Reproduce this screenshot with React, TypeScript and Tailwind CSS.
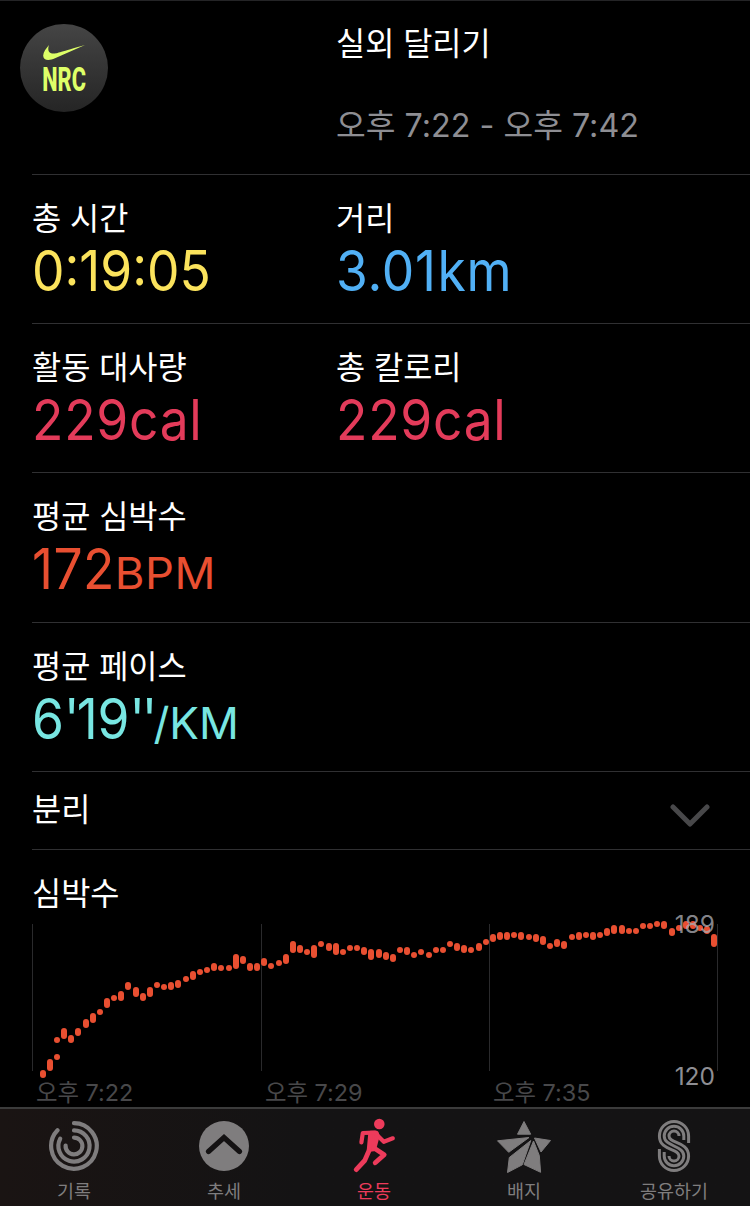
import type { ReactNode } from 'react';

const sans = "font-['Inter','Noto_Sans_CJK_KR',sans-serif]";

// [center x, top, bottom] in thirds of a pixel
const heartRate = [
  [129, 3210, 3234], [150, 3177, 3213], [171, 3162, 3180], [171, 3111, 3129], [192, 3084, 3117],
  [213, 3105, 3129], [234, 3084, 3108], [258, 3057, 3084], [279, 3039, 3069], [300, 3027, 3045],
  [321, 2994, 3024], [342, 2985, 3003], [363, 2973, 3003], [384, 2946, 2970], [408, 2961, 2991],
  [429, 2979, 3003], [450, 2961, 2991], [471, 2946, 2964], [492, 2952, 2970], [513, 2946, 2970],
  [534, 2940, 2964], [558, 2928, 2946], [579, 2913, 2940], [600, 2907, 2925], [621, 2901, 2919],
  [642, 2889, 2913], [663, 2895, 2913], [687, 2895, 2913], [708, 2862, 2907], [729, 2868, 2892],
  [750, 2889, 2913], [771, 2889, 2913], [792, 2874, 2898], [813, 2889, 2907], [837, 2880, 2898],
  [858, 2862, 2892], [879, 2823, 2859], [900, 2835, 2859], [921, 2847, 2865], [942, 2835, 2874],
  [963, 2823, 2841], [987, 2829, 2853], [1008, 2829, 2865], [1029, 2847, 2865], [1050, 2835, 2853],
  [1071, 2835, 2853], [1092, 2841, 2865], [1113, 2847, 2880], [1137, 2847, 2874], [1158, 2856, 2880],
  [1179, 2862, 2886], [1200, 2841, 2859], [1221, 2841, 2865], [1242, 2856, 2874], [1263, 2847, 2865],
  [1287, 2856, 2874], [1308, 2841, 2859], [1329, 2841, 2859], [1350, 2823, 2841], [1371, 2829, 2853],
  [1392, 2835, 2859], [1413, 2841, 2859], [1437, 2829, 2853], [1458, 2817, 2835], [1479, 2802, 2826],
  [1500, 2796, 2820], [1521, 2796, 2820], [1542, 2796, 2814], [1563, 2796, 2820], [1587, 2802, 2820],
  [1608, 2802, 2826], [1629, 2808, 2835], [1650, 2829, 2847], [1671, 2817, 2841], [1692, 2823, 2847],
  [1716, 2802, 2820], [1737, 2796, 2820], [1758, 2796, 2814], [1779, 2796, 2820], [1800, 2796, 2814],
  [1821, 2784, 2808], [1842, 2775, 2802], [1866, 2775, 2802], [1887, 2784, 2802], [1908, 2784, 2802],
  [1929, 2769, 2787], [1950, 2769, 2787], [1971, 2763, 2781], [1992, 2763, 2787], [2016, 2784, 2808],
  [2037, 2775, 2793], [2058, 2763, 2787], [2079, 2763, 2787], [2100, 2775, 2793], [2121, 2778, 2802],
  [2142, 2802, 2841],
];

function NrcBadge() {
  return (
    <div className="mt-[23px] ml-5 flex h-[88px] w-[88px] flex-col items-center rounded-full bg-gradient-to-b from-[#454545] to-[#252525] text-[#deff68]">
      <svg className="mt-[21px] h-[15px] w-[42px]" viewBox="0 0 42 15" fill="currentColor">
        <path d="M6 0C4.500 4 5 8.800 11 8.600 14 8.400 18 6.800 42 0L12 13.300C6 16 0 15.500.2 10.500.3 7 3 3.500 6 0Z" />
      </svg>
      <span className="mt-[6px] origin-center scale-x-[0.66] font-['Roboto',sans-serif] text-[33px] leading-[28px] font-extrabold">
        NRC
      </span>
    </div>
  );
}

function Metric({ label, className, children }: { label: string; className: string; children: ReactNode }) {
  return (
    <div>
      <div className="mt-[24px] text-[31.7px] leading-[40px] text-white">{label}</div>
      <div
        className={`mt-[2px] origin-left scale-x-[0.92] text-[56px] leading-[60px] font-[430] whitespace-nowrap ${className}`}
      >
        {children}
      </div>
    </div>
  );
}

function MetricRow({ tall, children }: { tall?: boolean; children: ReactNode }) {
  return (
    <div className={`ml-8 grid grid-cols-[304px_1fr] border-b border-[#303032] ${tall ? 'h-[150px]' : 'h-[149px]'}`}>
      {children}
    </div>
  );
}

function HeartRateChart() {
  return (
    <div className="relative h-[257px]">
      <h2 className="ml-8 pt-[24px] text-[31.7px] leading-[40px] text-white">심박수</h2>
      <svg className="mt-px block h-[165px] w-full" viewBox="0 915 750 165">
        {[32.5, 261.5, 489.5, 717.5].map((x) => (
          <line key={x} x1={x} x2={x} y1="924" y2="1071" stroke="#2a2a2c" />
        ))}
        {heartRate.map(([x, top, bottom], i) => (
          <rect key={i} x={x / 3 - 3} y={top / 3} width="6" height={(bottom - top) / 3} rx="3" fill="#e84f31" />
        ))}
      </svg>
      <div className="-mt-px flex pl-9 text-[23.4px] leading-[28px] text-[#48484a]">
        <span className="w-[229px]">오후 7:22</span>
        <span className="w-[228px]">오후 7:29</span>
        <span>오후 7:35</span>
      </div>
      <span className="absolute top-[60px] right-[35px] text-[24.5px] leading-[28px] text-[#a8a8af]/80">189</span>
      <span className="absolute top-[212px] right-[35px] text-[24.5px] leading-[28px] text-[#8e8e93]">120</span>
    </div>
  );
}

function RingsIcon() {
  return (
    <svg width="52" height="58" viewBox="48 1117 52 58" fill="none" stroke="currentColor" strokeWidth="4.2" strokeLinecap="round">
      <path d="M74 1123.200A22.800 22.800 0 1 1 57.500 1130.200" />
      <path d="M74 1130.400A15.600 15.600 0 1 1 60.200 1138.700" />
      <path d="M74 1137.600A8.400 8.400 0 1 1 65.600 1145.500" />
    </svg>
  );
}

function TrendsIcon() {
  return (
    <svg width="52" height="58" viewBox="198 1117 52 58" fill="none">
      <circle cx="224" cy="1146" r="25" fill="currentColor" />
      <path d="M208.500 1151.500 224 1137.500l15.500 14" stroke="#141213" strokeWidth="5.2" strokeLinecap="round" />
    </svg>
  );
}

function RunnerIcon() {
  return (
    <svg width="52" height="58" viewBox="348 1117 52 58" fill="none" stroke="currentColor" strokeLinecap="round" strokeLinejoin="round">
      <circle cx="379.3" cy="1124" r="5.3" fill="currentColor" stroke="none" />
      <path d="M370.500 1133 376.500 1133 377.500 1136 374 1149 369 1149.500Z" fill="currentColor" strokeWidth="4.4" />
      <path d="M375 1132.700 362.800 1133 361.400 1142.400" strokeWidth="4.2" />
      <path d="M377 1135 383.800 1141.800 392.800 1138.300" strokeWidth="4.2" />
      <path d="M369.500 1149.500 364.700 1160.500 356.200 1169.600" strokeWidth="4.8" />
      <path d="M374 1148 384.200 1154.700 375.200 1162.800" strokeWidth="4.8" />
    </svg>
  );
}

function AwardsIcon() {
  return (
    <svg width="58" height="58" viewBox="495 1117 58 58" fill="currentColor" stroke="currentColor" strokeLinejoin="round">
      <path d="M524 1121.500 517.500 1134.200h13.200Z" />
      <path d="M497.500 1140.800 529 1137.500 508.700 1152.300Z" />
      <path d="M534.500 1138 550.500 1140.500 541 1152Z" />
      <path d="M509.300 1157.500 530.800 1140.500 522.300 1164.800 507.500 1172.500Z" />
      <path d="M533.500 1141 539.300 1155.500 540.600 1172.300 524 1164.500Z" />
    </svg>
  );
}

function SharingIcon() {
  return (
    <svg width="40" height="58" viewBox="655 1117 40 58" fill="none" stroke="currentColor" strokeWidth="3">
      <path d="M689.600 1143V1136A14.600 14.600 0 0 0 660.400 1136C660.400 1151 680 1148 680 1156A5 5 0 0 1 670 1156" />
      <path d="M684.800 1140V1136A9.800 9.800 0 0 0 665.200 1136C665.200 1147 684.800 1145 684.800 1156A9.800 9.800 0 0 1 665.200 1156V1152" />
      <path d="M680 1136A5 5 0 0 0 670 1136C670 1144 689.600 1141 689.600 1156A14.600 14.600 0 0 1 660.400 1156V1149" />
    </svg>
  );
}

const tabs = [
  { label: '기록', icon: RingsIcon },
  { label: '추세', icon: TrendsIcon },
  { label: '운동', icon: RunnerIcon, active: true },
  { label: '배지', icon: AwardsIcon },
  { label: '공유하기', icon: SharingIcon },
];

function TabBar() {
  return (
    <nav className="flex h-[99px] shrink-0 border-t-2 border-[#3b3b3b] bg-[#141314] bg-gradient-to-r from-[#1a1413] to-[#141314] to-40%">
      {tabs.map((tab) => (
        <div
          key={tab.label}
          className={`flex w-[150px] flex-col items-center pt-[8px] pr-[2px] ${tab.active ? 'text-[#ed3b5b]' : 'text-[#7f7d7e]'}`}
        >
          <tab.icon />
          <span className="mt-[3px] text-[18.5px] leading-[26px]">{tab.label}</span>
        </div>
      ))}
    </nav>
  );
}

export default function App() {
  return (
    <div className={`flex h-[1206px] w-[750px] flex-col overflow-hidden border-t border-[#242426] bg-black ${sans}`}>
      <header className="grid h-[173px] shrink-0 grid-cols-[336px_1fr]">
        <NrcBadge />
        <div>
          <h1 className="mt-[23px] text-[31.7px] leading-[40px] text-white">실외 달리기</h1>
          <p className="mt-[42px] text-[32.3px] leading-[40px] text-[#8e8e93]">오후 7:22 - 오후 7:42</p>
        </div>
      </header>
      <div className="ml-8 h-px shrink-0 bg-[#303032]" />

      <MetricRow>
        <Metric label="총 시간" className="text-[#fbe35c]">0:19:05</Metric>
        <Metric label="거리" className="tracking-[0.8px] text-[#51b0f5]">
          3.01<span className="ml-[1px]">km</span>
        </Metric>
      </MetricRow>
      <MetricRow>
        <Metric label="활동 대사량" className="tracking-[0.8px] text-[#e33b5a]">229cal</Metric>
        <Metric label="총 칼로리" className="tracking-[0.8px] text-[#e33b5a]">229cal</Metric>
      </MetricRow>
      <MetricRow tall>
        <Metric label="평균 심박수" className="tracking-[0.5px] text-[#e84f31]">
          172<span className="inline-block origin-left scale-x-[1.12] text-[44px]">BPM</span>
        </Metric>
      </MetricRow>
      <MetricRow>
        <Metric label="평균 페이스" className="text-[#78e6e2]">
          6<span className="tracking-[-3px]">'</span>19<span className="tracking-[-3.5px]">''</span>
          <span className="-ml-[1px] inline-block origin-left scale-x-[1.09] text-[44px]">/KM</span>
        </Metric>
      </MetricRow>

      <button className="ml-8 flex h-[78px] shrink-0 items-center justify-between border-b border-[#303032] pr-10 text-left">
        <span className="-mt-[2px] text-[31.7px] leading-[40px] text-white">분리</span>
        <svg className="mt-[10px]" width="40" height="24" viewBox="0 0 40 24" fill="none">
          <path d="M3 3 20 20 37 3" stroke="#48484a" strokeWidth="5" strokeLinecap="round" strokeLinejoin="round" />
        </svg>
      </button>

      <HeartRateChart />
      <TabBar />
    </div>
  );
}
